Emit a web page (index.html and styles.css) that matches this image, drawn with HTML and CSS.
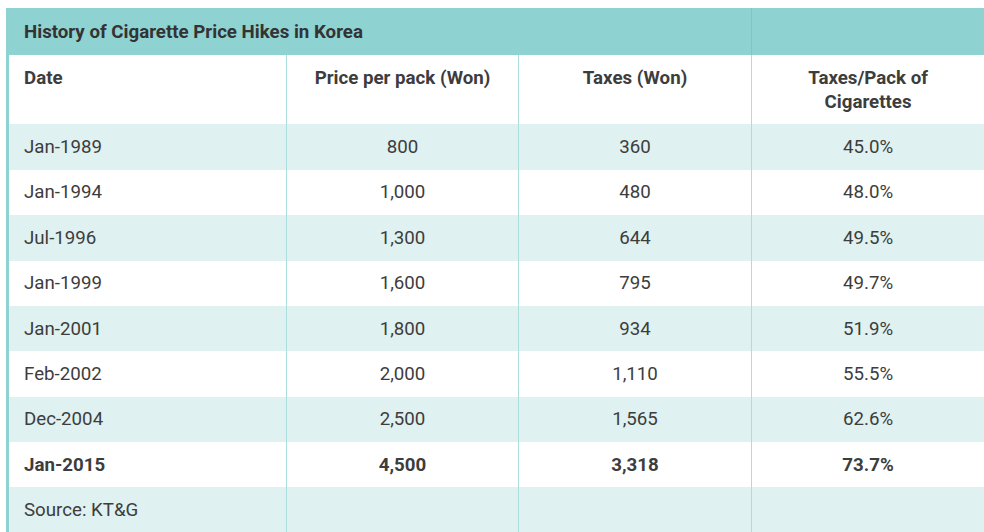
FILE: index.html
```html
<!DOCTYPE html>
<html>
<head>
<meta charset="utf-8">
<link rel="stylesheet" href="styles.css">
</head>
<body>
<table class="hikes">
  <colgroup>
    <col class="c1"><col class="c2"><col class="c3"><col class="c4">
  </colgroup>
  <thead>
    <tr class="title-row">
      <th colspan="3" class="title">History of Cigarette Price Hikes in Korea</th>
      <th class="title-empty"></th>
    </tr>
    <tr class="head-row">
      <th class="left">Date</th>
      <th>Price per pack (Won)</th>
      <th>Taxes (Won)</th>
      <th>Taxes/Pack of<br>Cigarettes</th>
    </tr>
  </thead>
  <tbody>
    <tr class="alt"><td class="left">Jan-1989</td><td>800</td><td>360</td><td>45.0%</td></tr>
    <tr><td class="left">Jan-1994</td><td>1,000</td><td>480</td><td>48.0%</td></tr>
    <tr class="alt"><td class="left">Jul-1996</td><td>1,300</td><td>644</td><td>49.5%</td></tr>
    <tr><td class="left">Jan-1999</td><td>1,600</td><td>795</td><td>49.7%</td></tr>
    <tr class="alt"><td class="left">Jan-2001</td><td>1,800</td><td>934</td><td>51.9%</td></tr>
    <tr><td class="left">Feb-2002</td><td>2,000</td><td>1,110</td><td>55.5%</td></tr>
    <tr class="alt"><td class="left">Dec-2004</td><td>2,500</td><td>1,565</td><td>62.6%</td></tr>
    <tr class="bold"><td class="left">Jan-2015</td><td>4,500</td><td>3,318</td><td>73.7%</td></tr>
    <tr class="alt"><td class="left">Source: KT&amp;G</td><td></td><td></td><td></td></tr>
  </tbody>
</table>
</body>
</html>
```
FILE: styles.css
```css
html, body {
  margin: 0;
  padding: 0;
  background: #ffffff;
}
body {
  padding: 8px 0 0 6px;
  font-family: Roboto, "Liberation Sans", Arial, sans-serif;
  font-size: 18.7px;
  color: #3d3d3d;
}
.hikes {
  width: 977px;
  border-collapse: collapse;
  table-layout: fixed;
  border-left: 3px solid #8fd2d2;
  border-right: 1px solid #8fd2d2;
}
.c1 { width: 279px; }
.c2 { width: 232px; }
.c3 { width: 233px; }
.c4 { width: 233px; }
.hikes th,
.hikes td {
  padding: 10.7px 15px;
  line-height: 24px;
  text-align: center;
  vertical-align: top;
  border-left: 1px solid #acdede;
  font-weight: 400;
}
.hikes th { font-weight: 700; }
.hikes .left { text-align: left; border-left: none; }
.title-row th {
  background: #8fd2d2;
  padding: 11.5px 15px;
  color: #333;
}
.title-row .title { text-align: left; border-left: none; }
.title-row .title-empty { border-left: 1px solid #7cc8c8; }
.head-row th { background: #ffffff; color: #3d3d3d; }
.hikes tr.alt td { background: #dff1f0; }
.hikes tr.bold td { font-weight: 700; }
```
